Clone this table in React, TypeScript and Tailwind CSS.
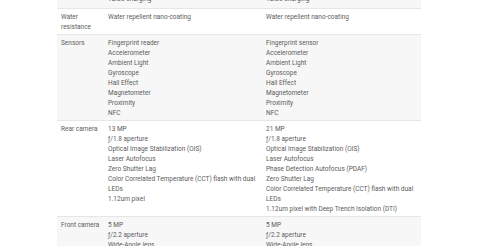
import React from "react";

type Row = { label: string; a: string[]; b: string[]; grey: boolean };

const rows: Row[] = [
  { label: "", a: ["Turbo charging"], b: ["Turbo charging"], grey: true },
  {
    label: "Water resistance",
    a: ["Water repellent nano-coating"],
    b: ["Water repellent nano-coating"],
    grey: false,
  },
  {
    label: "Sensors",
    a: ["Fingerprint reader", "Accelerometer", "Ambient Light", "Gyroscope", "Hall Effect", "Magnetometer", "Proximity", "NFC"],
    b: ["Fingerprint sensor", "Accelerometer", "Ambient Light", "Gyroscope", "Hall Effect", "Magnetometer", "Proximity", "NFC"],
    grey: true,
  },
  {
    label: "Rear camera",
    a: [
      "13 MP",
      "ƒ/1.8 aperture",
      "Optical Image Stabilization (OIS)",
      "Laser Autofocus",
      "Zero Shutter Lag",
      "Color Correlated Temperature (CCT) flash with dual LEDs",
      "1.12um pixel",
    ],
    b: [
      "21 MP",
      "ƒ/1.8 aperture",
      "Optical Image Stabilization (OIS)",
      "Laser Autofocus",
      "Phase Detection Autofocus (PDAF)",
      "Zero Shutter Lag",
      "Color Correlated Temperature (CCT) flash with dual LEDs",
      "1.12um pixel with Deep Trench Isolation (DTI)",
    ],
    grey: false,
  },
  {
    label: "Front camera",
    a: ["5 MP", "ƒ/2.2 aperture", "Wide-Angle lens", "1.4um pixel"],
    b: ["5 MP", "ƒ/2.2 aperture", "Wide-Angle lens", "1.4um pixel"],
    grey: true,
  },
];

export default function App() {
  return (
    <div
      className="w-[480px] h-[246px] overflow-hidden bg-white text-[#5c5c5c] text-[6.5px] leading-[10px]"
      style={{ fontFamily: "Roboto, 'Liberation Sans', sans-serif" }}
    >
      <div className="ml-[57px] w-[364px] -mt-[9px]">
        {rows.map((r, i) => (
          <div
            key={i}
            className={`grid grid-cols-[47px_158px_159px] pt-[3px] ${i > 0 ? "pb-[2px] border-t border-[#e6e6e6]" : "pb-[4px]"} ${r.grey ? "bg-[#f7f7f7]" : "bg-white"}`}
          >
            <div className="pl-[4px]">{r.label}</div>
            <div className="pl-[4px] pr-[2px]">
              {r.a.map((t, j) => (
                <div key={j}>{t}</div>
              ))}
            </div>
            <div className="pl-[4px] pr-[2px]">
              {r.b.map((t, j) => (
                <div key={j}>{t}</div>
              ))}
            </div>
          </div>
        ))}
      </div>
    </div>
  );
}
